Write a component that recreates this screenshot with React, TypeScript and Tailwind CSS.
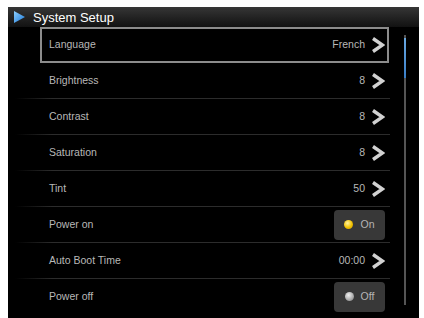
import React from 'react';

type Row = {
  label: string;
  value?: string;
  toggle?: 'on' | 'off';
  selected?: boolean;
};

const rows: Row[] = [
  { label: 'Language', value: 'French', selected: true },
  { label: 'Brightness', value: '8' },
  { label: 'Contrast', value: '8' },
  { label: 'Saturation', value: '8' },
  { label: 'Tint', value: '50' },
  { label: 'Power on', toggle: 'on' },
  { label: 'Auto Boot Time', value: '00:00' },
  { label: 'Power off', toggle: 'off' },
];

function Chevron() {
  return (
    <svg width="14" height="16" viewBox="0 0 14 16" className="shrink-0">
      <polyline
        points="2,1.5 11.5,8 2,14.5"
        fill="none"
        stroke="#d2d2d2"
        strokeWidth="3.4"
        strokeLinejoin="miter"
      />
    </svg>
  );
}

function Toggle({ on }: { on: boolean }) {
  return (
    <div className="flex h-[30px] w-[51px] items-center justify-center gap-[7px] rounded-[4px] bg-[#383838]">
      <span
        className={
          on
            ? 'h-[9px] w-[9px] rounded-full bg-[radial-gradient(circle_at_40%_35%,#fff3a0,#f2c200_55%,#c99400)]'
            : 'h-[9px] w-[9px] rounded-full bg-[radial-gradient(circle_at_40%_35%,#f0f0f0,#a8a8a8_60%,#7a7a7a)]'
        }
      />
      <span className="text-[10.5px] text-[#b5b5b5]">{on ? 'On' : 'Off'}</span>
    </div>
  );
}

export default function App() {
  return (
    <div className="h-[318px] w-[424px] overflow-hidden bg-white pl-[8px] pt-[7px] font-['Liberation_Sans',Arial,sans-serif]">
      <div className="flex h-[311px] w-[411px] flex-col bg-black">
        {/* Header */}
        <div className="flex h-[20px] shrink-0 items-center bg-gradient-to-b from-[#363636] to-[#121212] pl-[6px]">
          <svg width="11" height="12" viewBox="0 0 11 12">
            <defs>
              <linearGradient id="tri" x1="0" y1="0" x2="1" y2="1">
                <stop offset="0" stopColor="#8fd0ff" />
                <stop offset="1" stopColor="#1a78d8" />
              </linearGradient>
            </defs>
            <polygon points="0,0 11,6 0,12" fill="url(#tri)" />
          </svg>
          <span className="ml-[8px] text-[13px] leading-none text-white">System Setup</span>
        </div>

        {/* Body */}
        <div className="flex flex-1">
          <div className="ml-[7px] flex w-[375px] flex-col">
            {rows.map((row, i) => (
              <React.Fragment key={row.label}>
                {i > 1 && (
                  <div className="h-px bg-gradient-to-r from-transparent via-[#2c2c2c] via-10% to-[#2c2c2c]" />
                )}
                <div
                  className={
                    row.selected
                      ? 'flex h-[36px] items-center pl-[25px] pr-[1px]'
                      : 'flex h-[35px] items-center pl-[25px] pr-[1px]'
                  }
                >
                  <div
                    className={
                      row.selected
                        ? 'flex h-full flex-1 items-center justify-between border-2 border-[#8c8c8c] pl-[7px] pr-[2px]'
                        : 'flex h-full flex-1 items-center justify-between pl-[9px] pr-[4px]'
                    }
                  >
                    <span className="text-[10.5px] text-[#b8b8b8]">{row.label}</span>
                    {row.toggle ? (
                      <Toggle on={row.toggle === 'on'} />
                    ) : (
                      <div className="flex items-center gap-[6px]">
                        <span className="text-[10.5px] text-[#b8b8b8]">{row.value}</span>
                        <Chevron />
                      </div>
                    )}
                  </div>
                </div>
              </React.Fragment>
            ))}
          </div>

          {/* Scrollbar */}
          <div className="ml-[14px] mt-[8px] flex h-[270px] w-[2px] flex-col bg-[#555555]">
            <div className="mt-[3px] h-[40px] w-[2px] bg-gradient-to-b from-[#6aa8e0] to-[#3a7fc8]" />
          </div>
        </div>
      </div>
    </div>
  );
}
